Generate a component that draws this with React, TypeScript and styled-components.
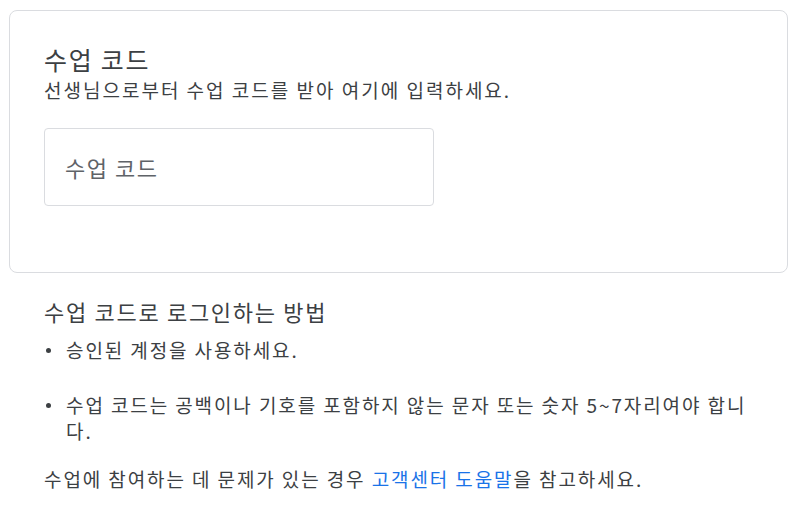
import React from "react";
import styled, { createGlobalStyle } from "styled-components";

const GlobalStyle = createGlobalStyle`
  html, body {
    margin: 0;
    padding: 0;
    background: #ffffff;
  }
  body {
    font-family: "Noto Sans CJK KR", "Noto Sans", sans-serif;
    color: #3c4043;
  }
  * { box-sizing: border-box; }
`;

const Page = styled.main`
  display: flex;
  flex-direction: column;
  padding: 10px 12px 0 9px;
`;

const Card = styled.section`
  border: 1px solid #dadce0;
  border-radius: 8px;
  padding: 32px 34px 66px 34px;
  display: flex;
  flex-direction: column;
`;

const Title = styled.h1`
  margin: 0;
  font-size: 25px;
  line-height: 32px;
  font-weight: 400;
  letter-spacing: 1.7px;
  color: #3c4043;
`;

const Subtitle = styled.p`
  margin: 3px 0 0 0;
  font-size: 19px;
  line-height: 24px;
  letter-spacing: 2px;
  color: #3c4043;
`;

const CodeInput = styled.input`
  margin-top: 26px;
  width: 390px;
  height: 78px;
  border: 1px solid #dadce0;
  border-radius: 4px;
  padding: 0 20px;
  font-family: "Noto Sans CJK KR", "Noto Sans", sans-serif;
  font-size: 22px;
  letter-spacing: 1.5px;
  color: #3c4043;
  background: #fff;
  outline: none;
  &::placeholder {
    color: #5f6368;
  }
`;

const Help = styled.section`
  padding: 24px 36px 0 35px;
  display: flex;
  flex-direction: column;
`;

const HelpTitle = styled.h2`
  margin: 0;
  font-size: 22px;
  line-height: 28px;
  font-weight: 400;
  letter-spacing: 1.7px;
  color: #3c4043;
`;

const List = styled.ul`
  list-style: none;
  margin: 12px 0 0 0;
  padding: 0;
  display: flex;
  flex-direction: column;
  gap: 29px;
`;

const Item = styled.li`
  display: flex;
  font-size: 19px;
  line-height: 26px;
  letter-spacing: 1.9px;
  color: #3c4043;
`;

const Marker = styled.span`
  flex: 0 0 22px;
  height: 26px;
  display: flex;
  align-items: center;
  padding-left: 2px;
  &::after {
    content: "";
    width: 5px;
    height: 5px;
    border-radius: 50%;
    background: #3c4043;
  }
`;

const ItemText = styled.span`
  flex: 1;
`;

const Note = styled.p`
  margin: 22px 0 0 0;
  font-size: 19px;
  line-height: 26px;
  letter-spacing: 1.9px;
  color: #3c4043;
`;

const Link = styled.a`
  color: #1a73e8;
  text-decoration: none;
`;

export default function App() {
  return (
    <>
      <GlobalStyle />
      <Page>
        <Card>
          <Title>수업 코드</Title>
          <Subtitle>선생님으로부터 수업 코드를 받아 여기에 입력하세요.</Subtitle>
          <CodeInput type="text" placeholder="수업 코드" aria-label="수업 코드" />
        </Card>
        <Help>
          <HelpTitle>수업 코드로 로그인하는 방법</HelpTitle>
          <List>
            <Item>
              <Marker />
              <ItemText>승인된 계정을 사용하세요.</ItemText>
            </Item>
            <Item>
              <Marker />
              <ItemText>
                수업 코드는 공백이나 기호를 포함하지 않는 문자 또는 숫자 5~7자리여야 합니다.
              </ItemText>
            </Item>
          </List>
          <Note>
            수업에 참여하는 데 문제가 있는 경우 <Link href="#">고객센터 도움말</Link>을 참고하세요.
          </Note>
        </Help>
      </Page>
    </>
  );
}
